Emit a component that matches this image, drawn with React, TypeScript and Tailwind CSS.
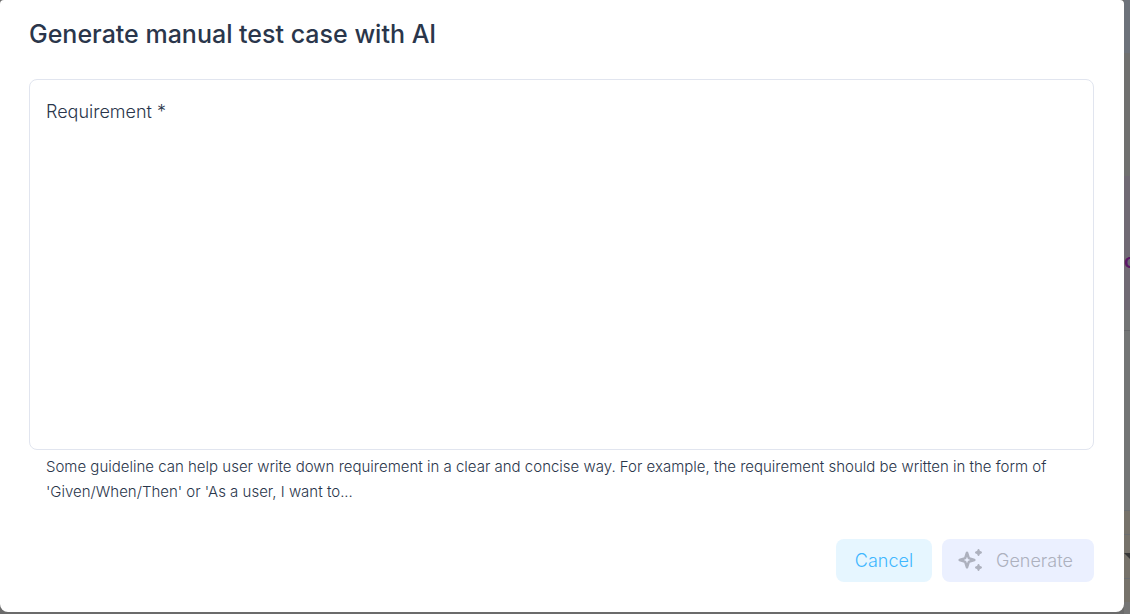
import React, { useState } from "react";

function SparklesIcon() {
  return (
    <svg viewBox="0 0 26 26" className="h-[26px] w-[26px] shrink-0" aria-hidden="true">
      <path
        fillRule="evenodd"
        clipRule="evenodd"
        d="M9 3.4C9.6 3.4 10 3.7 10.2 4.3L11.8 9.2 16.7 10.8C17.3 11 17.6 11.4 17.6 12 17.6 12.6 17.3 13 16.7 13.2L11.8 14.8 10.2 19.7C10 20.3 9.6 20.6 9 20.6 8.4 20.6 8 20.3 7.8 19.7L6.2 14.8 1.3 13.2C.7 13 .4 12.6.4 12 .4 11.4.7 11 1.3 10.8L6.2 9.2 7.8 4.3C8 3.7 8.4 3.4 9 3.4ZM9 8.8 8.1 11.1 5.8 12 8.1 12.9 9 15.2 9.9 12.9 12.2 12 9.9 11.1Z"
        fill="currentColor"
      />
      <path
        d="M20.5 2 21.2 3.8 23 4.5 21.2 5.2 20.5 7 19.8 5.2 18 4.5 19.8 3.8ZM20.5 17 21.2 18.8 23 19.5 21.2 20.2 20.5 22 19.8 20.2 18 19.5 19.8 18.8Z"
        fill="currentColor"
        stroke="currentColor"
        strokeWidth="2"
        strokeLinejoin="round"
      />
    </svg>
  );
}

function PageEdge() {
  return (
    <div className="flex w-[6px] shrink-0 flex-col overflow-hidden bg-[#757575]" aria-hidden="true">
      <div className="h-[53px] bg-[#6d727a]" />
      <div className="h-[123px] bg-[#70706f]" />
      <div className="flex h-[134px] flex-col justify-center bg-[#706a74] pt-9">
        <span className="text-xl leading-6 font-semibold text-[#5b1665]">c</span>
      </div>
      <div className="h-[21px] border-b border-[#666769] bg-[#737575]" />
      <div className="h-[179px] bg-[#737575]" />
      <div className="h-6 border-t border-[#6a6d70] bg-[#76726a]" />
      <div className="h-11 border-t border-[#6a6d70] bg-[#76726a] pt-[18px]">
        <svg viewBox="0 0 12 6" className="h-[6px] w-3">
          <path d="M0 0H12L6 6Z" fill="#363636" />
        </svg>
      </div>
      <div className="h-6 border-t border-[#6a6d70] bg-[#76726a]" />
    </div>
  );
}

export default function App() {
  const [requirement, setRequirement] = useState("");

  return (
    <div className="flex min-h-screen bg-[#6b6b6b] font-['Inter',sans-serif] text-[#2a364b]">
      <div
        role="dialog"
        aria-labelledby="dialog-title"
        className="mb-0.5 flex min-w-0 flex-1 flex-col rounded-t-sm rounded-b-lg bg-white pt-4 pr-[30px] pb-[30px] pl-[29px]"
      >
        <h1 id="dialog-title" className="text-[25px] leading-9 font-medium">
          Generate manual test case with AI
        </h1>

        <div className="mt-[27px] flex h-[371px] flex-col rounded-lg border border-[#e1e5ef] px-4 pt-5 pb-4">
          <label htmlFor="requirement" className="text-lg leading-6 font-light">
            Requirement *
          </label>
          <textarea
            id="requirement"
            required
            aria-describedby="requirement-help"
            value={requirement}
            onChange={(event) => setRequirement(event.target.value)}
            className="mt-2 w-full flex-1 resize-none bg-transparent text-lg leading-6 outline-none"
          />
        </div>
        <p id="requirement-help" className="mt-1 px-[17px] text-[15px] leading-[25px] font-light">
          Some guideline can help user write down requirement in a clear and concise way. For example, the
          requirement should be written in the form of 'Given/When/Then' or 'As a user, I want to...
        </p>

        <div className="mt-auto flex justify-end gap-[10px] text-lg font-light">
          <button type="button" className="h-[43px] w-24 rounded-lg bg-[#e6f6ff] text-[#40b7ff]">
            Cancel
          </button>
          <button
            type="button"
            disabled
            className="flex h-[43px] w-[152px] items-center gap-3 rounded-lg bg-[#ebf0ff] pl-4 text-[#adb1be]"
          >
            <SparklesIcon />
            Generate
          </button>
        </div>
      </div>
      <PageEdge />
    </div>
  );
}
